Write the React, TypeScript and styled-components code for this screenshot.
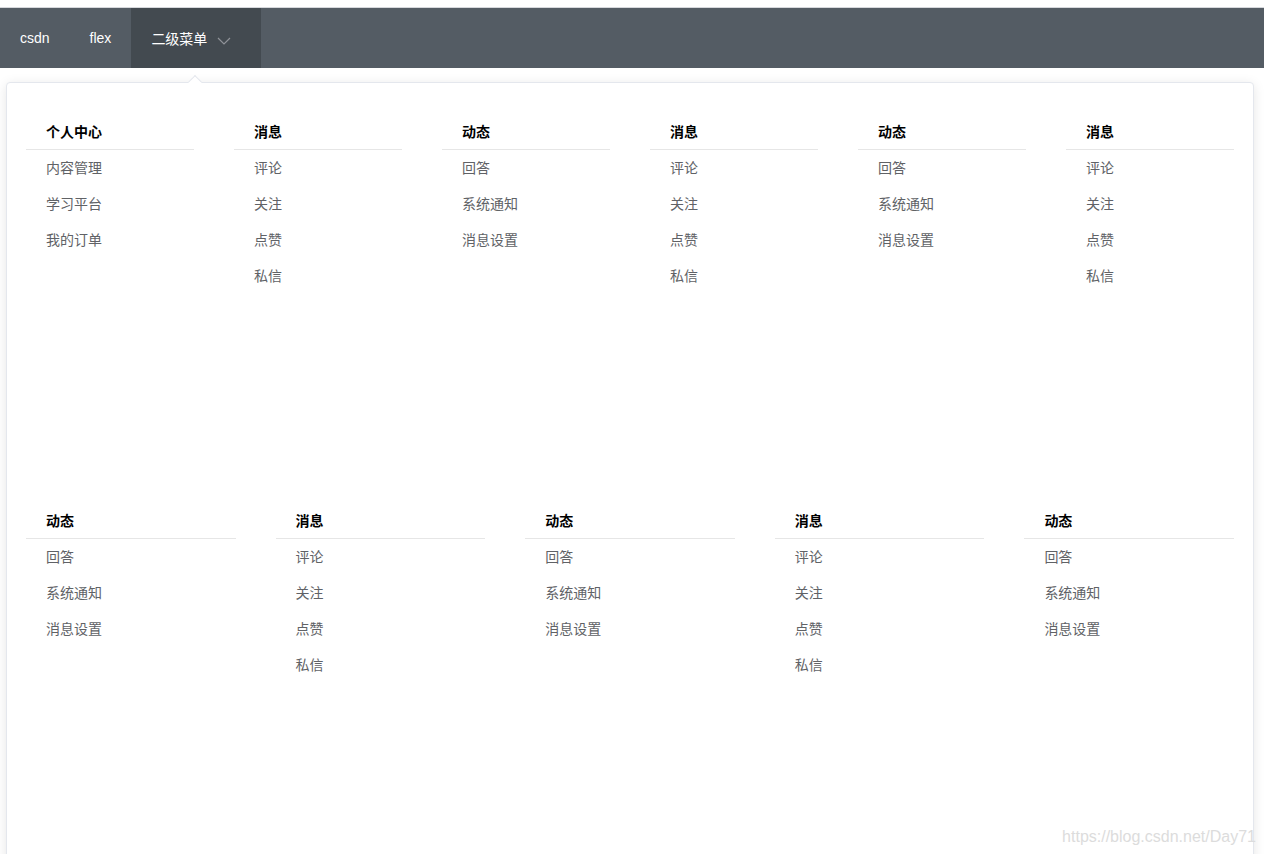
import React from "react";
import styled, { createGlobalStyle } from "styled-components";

const Global = createGlobalStyle`
  html, body { margin: 0; padding: 0; background: #fff; }
  body { font-family: "Noto Sans CJK SC", "Liberation Sans", sans-serif; overflow: hidden; }
  * { box-sizing: border-box; }
`;

const Page = styled.div`
  position: relative;
  width: 1264px;
  height: 854px;
  overflow: hidden;
  padding-top: 7px;
`;

const NavBar = styled.nav`
  display: flex;
  height: 61px;
  background: #545c64;
  border-top: 1px solid #d6d8dc;
`;

const NavItem = styled.div<{ $active?: boolean }>`
  display: flex;
  align-items: center;
  gap: 10px;
  height: 100%;
  padding: 0 ${(p) => (p.$active ? "30px" : "20px")} 0 20px;
  background: ${(p) => (p.$active ? "#434a50" : "transparent")};
  color: #fff;
  font-size: 14px;
  font-family: "Liberation Sans", "Noto Sans CJK SC", sans-serif;
`;

const ChevronWrap = styled.span`
  display: flex;
  margin-top: 5px;
`;

const Popup = styled.div`
  position: relative;
  margin: 14px 10px 0 6px;
  height: 900px;
  background: #fff;
  border: 1px solid #e4e7ed;
  border-radius: 4px;
  box-shadow: 0 2px 12px 0 rgba(0, 0, 0, 0.1);
  padding: 29px 19px 0;
`;

const Arrow = styled.div`
  position: absolute;
  top: -6px;
  left: 183px;
  width: 10px;
  height: 10px;
  background: #fff;
  border-left: 1px solid #e4e7ed;
  border-top: 1px solid #e4e7ed;
  transform: rotate(45deg);
`;

const Row = styled.div`
  display: flex;
  gap: 40px;
  height: 389px;
`;

const Group = styled.div`
  flex: 1;
  min-width: 0;
`;

const Heading = styled.div`
  height: 38px;
  line-height: 38px;
  padding-left: 20px;
  border-bottom: 1px solid #e6e6e6;
  font-size: 14px;
  font-weight: 700;
  color: #000;
`;

const Item = styled.div`
  height: 36px;
  line-height: 34px;
  padding-left: 20px;
  font-size: 14px;
  color: #606266;
`;

const Watermark = styled.div`
  position: absolute;
  right: 8px;
  bottom: 8px;
  font-family: "Liberation Sans", Arial, sans-serif;
  font-size: 16px;
  color: #dcdcdc;
`;

const Chevron = () => (
  <ChevronWrap>
    <svg width="14" height="10" viewBox="0 0 14 10" fill="none">
      <path d="M1 2 L7 8 L13 2" stroke="#909399" strokeWidth="1.2" />
    </svg>
  </ChevronWrap>
);

type G = { title: string; items: string[] };
const msg: G = { title: "消息", items: ["评论", "关注", "点赞", "私信"] };
const dyn: G = { title: "动态", items: ["回答", "系统通知", "消息设置"] };
const me: G = { title: "个人中心", items: ["内容管理", "学习平台", "我的订单"] };

const rows: G[][] = [
  [me, msg, dyn, msg, dyn, msg],
  [dyn, msg, dyn, msg, dyn],
];

export default function App() {
  return (
    <Page>
      <Global />
      <NavBar>
        <NavItem>csdn</NavItem>
        <NavItem>flex</NavItem>
        <NavItem $active>
          二级菜单
          <Chevron />
        </NavItem>
      </NavBar>
      <Popup>
        <Arrow />
        {rows.map((r, ri) => (
          <Row key={ri}>
            {r.map((g, gi) => (
              <Group key={gi}>
                <Heading>{g.title}</Heading>
                {g.items.map((it) => (
                  <Item key={it}>{it}</Item>
                ))}
              </Group>
            ))}
          </Row>
        ))}
      </Popup>
      <Watermark>https://blog.csdn.net/Day71</Watermark>
    </Page>
  );
}
